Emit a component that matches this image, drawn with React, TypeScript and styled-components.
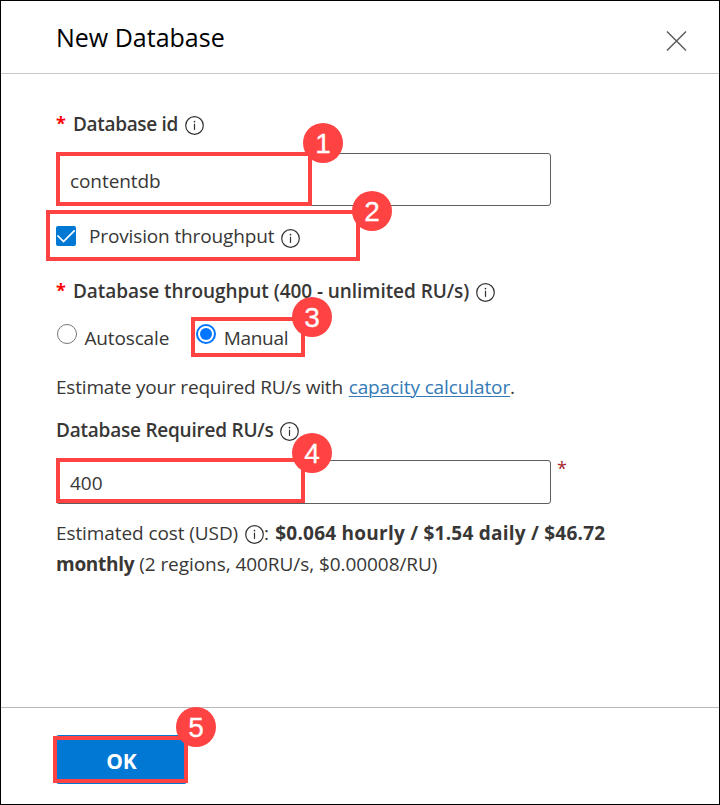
import React from "react";
import styled, { createGlobalStyle } from "styled-components";

const RED = "#ff4343";
const BLUE = "#0078d4";

const GlobalStyle = createGlobalStyle`
  *, *::before, *::after { box-sizing: border-box; }
  body {
    margin: 0;
    background: #fff;
    color: #383736;
    font-family: "Open Sans", "Noto Sans", sans-serif;
    font-size: 19px;
    line-height: 30px;
  }
`;

const Panel = styled.div`
  width: 720px;
  height: 805px;
  display: flex;
  flex-direction: column;
  background: #fff;
  border: 1px solid #000;
`;

const Header = styled.header`
  flex: none;
  height: 73px;
  display: flex;
  justify-content: space-between;
  align-items: flex-start;
  padding: 19px 32px 0 55px;
  border-bottom: 1px solid #c8c8c8;
`;

const Title = styled.h1`
  margin: 0;
  font-size: 25px;
  font-weight: 400;
  line-height: 34px;
  letter-spacing: 0;
  color: #000;
`;

const CloseButton = styled.button`
  display: flex;
  margin-top: 11px;
  padding: 0;
  border: 0;
  background: none;
`;

const Body = styled.main`
  flex: 1;
  display: flex;
  flex-direction: column;
  padding: 35px 0 0 55px;
`;

const Row = styled.div<{ $gap?: number }>`
  position: relative;
  display: flex;
  height: 30px;
  margin-top: ${(p) => p.$gap ?? 0}px;
`;

const Text = styled.span<{ $spacing?: number; $weight?: number }>`
  white-space: pre;
  font-weight: ${(p) => p.$weight ?? 400};
  letter-spacing: ${(p) => p.$spacing ?? 0}px;
`;

const Star = styled.span`
  width: 17px;
  margin-top: -1px;
  color: #f00;
  font-weight: 700;
  font-size: 18px;
`;

const Field = styled.div<{ $gap: number }>`
  position: relative;
  display: flex;
  align-items: flex-start;
  margin-top: ${(p) => p.$gap}px;
`;

const TextInput = styled.input<{ $height: number; $spacing?: number; $top: number }>`
  width: 495px;
  height: ${(p) => p.$height}px;
  padding: ${(p) => p.$top}px 13px 0;
  border: 1px solid #605e5c;
  border-radius: 3px;
  outline: none;
  background: #fff;
  color: #383736;
  font: inherit;
  letter-spacing: ${(p) => p.$spacing ?? 0}px;
`;

const FieldStar = styled.span`
  height: 24px;
  margin: -7px 0 0 6px;
  color: #a4262c;
  font-size: 18px;
`;

const CheckBox = styled.span`
  display: flex;
  width: 20px;
  height: 20px;
  margin: 5px 13px 0 0;
  border-radius: 2px;
  background: ${BLUE};
`;

const Radio = styled.span<{ $checked?: boolean; $left?: number; $right: number }>`
  display: flex;
  align-items: center;
  justify-content: center;
  flex: none;
  width: 20px;
  height: 20px;
  margin: 1px ${(p) => p.$right}px 0 ${(p) => p.$left ?? 0}px;
  border: ${(p) => (p.$checked ? "2px solid #0075ff" : "1.5px solid #767676")};
  border-radius: 50%;
  &::after {
    content: "";
    width: 12px;
    height: 12px;
    border-radius: 50%;
    background: ${(p) => (p.$checked ? "#0075ff" : "transparent")};
  }
`;

const Link = styled.a`
  margin-left: 1px;
  color: #337ab7;
  letter-spacing: -0.11px;
  text-decoration: underline;
  text-decoration-thickness: 1px;
  text-underline-offset: 2px;
  text-decoration-skip-ink: auto;
`;

const InfoSvg = styled.svg<{ $left: number; $top: number }>`
  flex: none;
  display: block;
  margin: ${(p) => p.$top}px 0 0 ${(p) => p.$left}px;
`;

const Outline = styled.div<{ $x: number; $y: number; $w: number; $h: number }>`
  position: absolute;
  left: ${(p) => p.$x}px;
  top: ${(p) => p.$y}px;
  width: ${(p) => p.$w}px;
  height: ${(p) => p.$h}px;
  border: 4px solid ${RED};
  pointer-events: none;
`;

const Badge = styled.span<{ $x: number; $y: number }>`
  position: absolute;
  z-index: 1;
  left: ${(p) => p.$x}px;
  top: ${(p) => p.$y}px;
  width: 40px;
  height: 40px;
  border-radius: 50%;
  background: ${RED};
  color: #fff;
  font: 28px/41px "Liberation Sans", Arial, sans-serif;
  -webkit-text-stroke: 0.3px #fff;
  text-align: center;
`;

const Footer = styled.footer`
  flex: none;
  height: 97px;
  padding: 27px 0 0 55px;
  border-top: 1px solid #b9b9b9;
`;

const ButtonWrap = styled.div`
  position: relative;
  width: 131px;
`;

const OkButton = styled.button`
  display: block;
  width: 131px;
  height: 49px;
  padding: 2px 0 0 0;
  border: 0;
  border-radius: 3px;
  background: ${BLUE};
  color: #fff;
  font: 700 21px/30px "Open Sans", "Noto Sans", sans-serif;
`;

function Info({ left = 7, top = 7 }: { left?: number; top?: number }) {
  return (
    <InfoSvg $left={left} $top={top} width="19" height="19" viewBox="0 0 19 19" fill="none">
      <circle cx="9.5" cy="9.5" r="8.8" stroke="#323130" strokeWidth="1.2" />
      <path d="M9.5 7.7v6.2" stroke="#323130" strokeWidth="1.2" />
      <circle cx="9.5" cy="5.6" r="0.85" fill="#323130" />
    </InfoSvg>
  );
}

export default function App() {
  return (
    <>
      <GlobalStyle />
      <Panel>
        <Header>
          <Title>New Database</Title>
          <CloseButton aria-label="Close">
            <svg width="21" height="20" viewBox="0 0 21 20" fill="none">
              <path d="M1 .5l19 19M20 .5l-19 19" stroke="#605e5c" strokeWidth="1.5" />
            </svg>
          </CloseButton>
        </Header>
        <Body>
          <Row>
            <Star>*</Star>
            <Text $weight={600} $spacing={-0.33}>Database id</Text>
            <Info left={7.4} />
          </Row>
          <Field $gap={14}>
            <TextInput $height={53} $top={3} $spacing={-0.08} defaultValue="contentdb" />
            <Outline $x={0} $y={-1} $w={256} $h={54} />
            <Badge $x={247} $y={-30}>1</Badge>
          </Field>
          <Row $gap={15}>
            <CheckBox>
              <svg width="20" height="20" viewBox="0 0 20 20" fill="none">
                <path d="M1.5 9.5l6 6L18.7 4.3" stroke="#fff" strokeWidth="1.7" />
              </svg>
            </CheckBox>
            <Text $spacing={-0.14}>Provision throughput</Text>
            <Info left={6.7} top={8} />
            <Outline $x={-10} $y={-11} $w={314} $h={51} />
            <Badge $x={296} $y={-30}>2</Badge>
          </Row>
          <Row $gap={25}>
            <Star>*</Star>
            <Text $weight={600} $spacing={-0.06}>Database throughput (400 - unlimited RU/s)</Text>
            <Info />
          </Row>
          <Row $gap={17}>
            <Radio $left={1} $right={7.5} />
            <Text $spacing={-0.15}>Autoscale</Text>
            <Radio $checked $left={26.5} $right={8} />
            <Text $spacing={-0.3}>Manual</Text>
            <Outline $x={135} $y={-6} $w={114} $h={40} />
            <Badge $x={236} $y={-26}>3</Badge>
          </Row>
          <Row $gap={19}>
            <Text $spacing={-0.19}>Estimate your required RU/s with </Text>
            <Link>capacity calculator</Link>
            <Text>.</Text>
          </Row>
          <Row $gap={13}>
            <Text $weight={600} $spacing={-0.23}>Database Required RU/s</Text>
            <Info left={6.6} />
          </Row>
          <Field $gap={15}>
            <TextInput $height={44} $top={1} defaultValue="400" />
            <FieldStar>*</FieldStar>
            <Outline $x={0} $y={-2} $w={249} $h={45} />
            <Badge $x={236} $y={-27}>4</Badge>
          </Field>
          <Row $gap={14}>
            <Text $spacing={-0.09}>Estimated cost (USD)</Text>
            <Info />
            <Text $spacing={0.6}>: </Text>
            <Text $weight={700} $spacing={0.24}>$0.064 hourly / $1.54 daily / $46.72</Text>
          </Row>
          <Row $gap={1}>
            <Text $weight={700} $spacing={-0.28}>monthly</Text>
            <Text $spacing={-0.06}> (2 regions, 400RU/s, $0.00008/RU)</Text>
          </Row>
        </Body>
        <Footer>
          <ButtonWrap>
            <OkButton>OK</OkButton>
            <Outline $x={-3} $y={1} $w={135} $h={47} />
            <Badge $x={120} $y={-28}>5</Badge>
          </ButtonWrap>
        </Footer>
      </Panel>
    </>
  );
}
